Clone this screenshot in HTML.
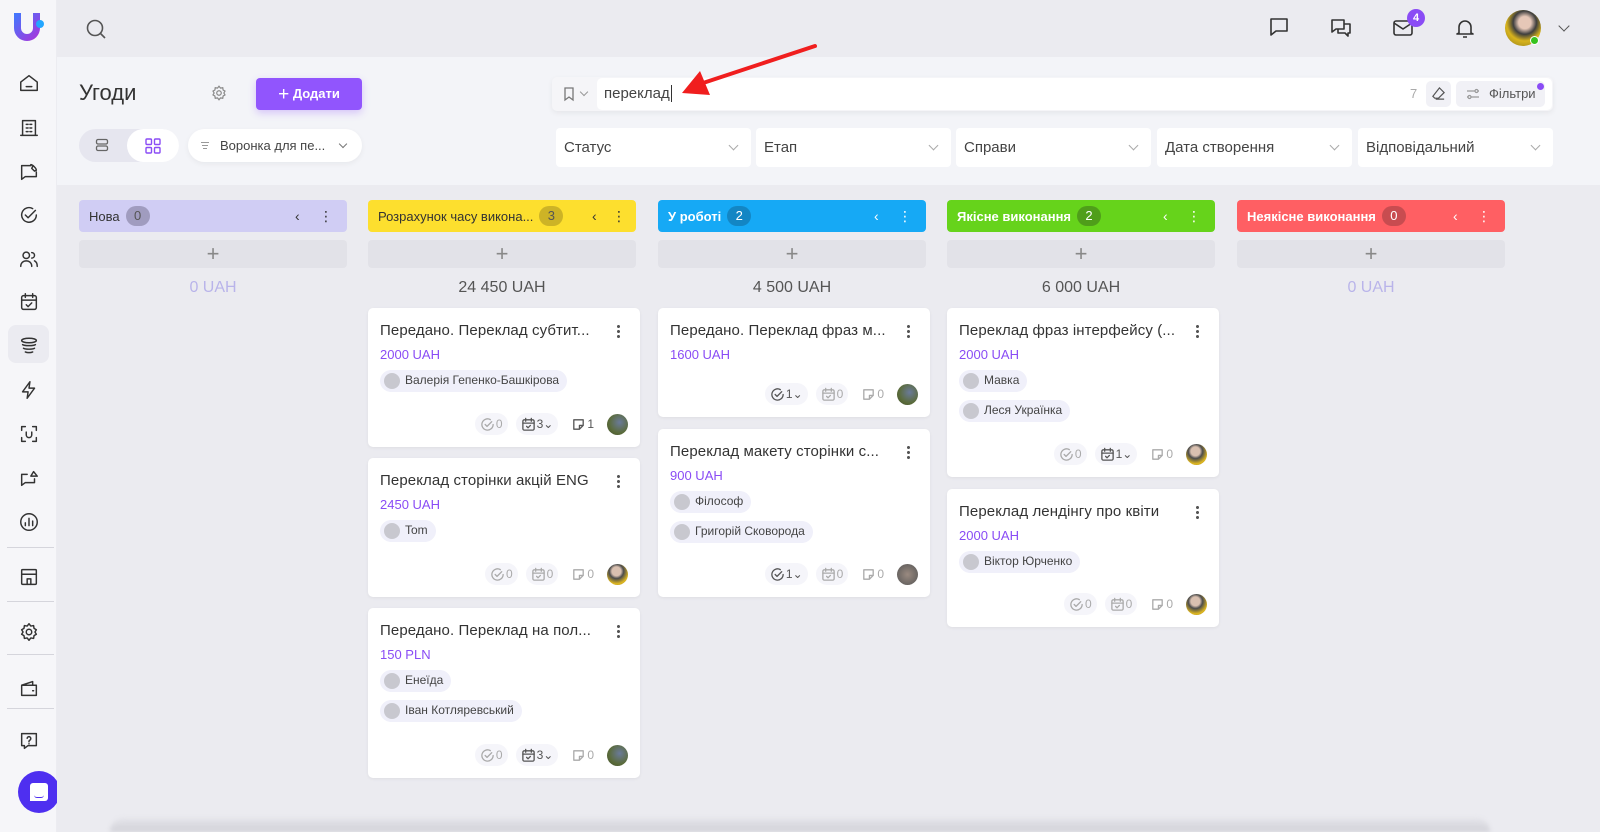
<!DOCTYPE html>
<html><head><meta charset="utf-8">
<style>
*{box-sizing:border-box;margin:0;padding:0}
body{width:1600px;height:832px;overflow:hidden;background:#ebebf0;font-family:"Liberation Sans","DejaVu Sans",sans-serif;color:#333;position:relative}
.abs{position:absolute}
#side{left:0;top:0;width:57px;height:832px;background:#f6f6f9;border-right:1px solid #ececf1}
#top{left:57px;top:0;width:1543px;height:57px;background:#ebebf0}
#head{left:57px;top:57px;width:1543px;height:128px;background:#f3f4f8}
#board{left:57px;top:185px;width:1543px;height:647px;background:#ebebf0}
.si{position:absolute;left:18px;width:22px;height:22px}
.si svg{width:22px;height:22px;fill:none;stroke:#333;stroke-width:1.6;stroke-linecap:round;stroke-linejoin:round}
.div{position:absolute;left:7px;width:47px;height:1px;background:#d5d5dc}
.dd{position:absolute;top:128px;height:39px;width:195px;background:#fff;border-radius:4px;font-size:15px;color:#444;padding:11px 8px}
.dd:after{content:"";position:absolute;right:14px;top:14px;width:6px;height:6px;border-right:1px solid #aaa;border-bottom:1px solid #aaa;transform:rotate(45deg)}
.ch{position:absolute;top:200px;height:32px;width:268px;border-radius:4px;font-size:13px;font-weight:bold;padding:9px 10px;white-space:nowrap}
.bd{display:inline-block;min-width:24px;height:20px;border-radius:10px;text-align:center;line-height:20px;font-weight:normal;margin-left:6px;margin-top:-3px;vertical-align:middle}
.ctl{position:absolute;top:8px;font-weight:normal;font-size:14px}
.add{position:absolute;top:240px;height:28px;width:268px;background:#e2e2e8;border-radius:4px;text-align:center;font-size:22px;color:#888;line-height:27px;font-weight:300}
.tot{position:absolute;top:279px;width:268px;text-align:center;font-size:16px;color:#555}
.card{position:absolute;width:272px;background:#fff;border-radius:5px;box-shadow:0 1px 3px rgba(0,0,0,.06)}
.card .t{position:absolute;left:12px;top:14px;font-size:15px;color:#333;white-space:nowrap;letter-spacing:.1px}
.card .m{position:absolute;right:20px;top:16px;width:3px;height:14px;background:radial-gradient(circle,#555 1.4px,transparent 1.6px) 0 0/3px 5px repeat-y}
.card .p{position:absolute;left:12px;top:39px;font-size:13px;color:#8a4cf5}
.chip{position:absolute;left:12px;height:22px;background:#f0f0fa;border-radius:11px;padding:3px 8px 0 25px;font-size:12px;color:#444;white-space:nowrap}
.chip:before{content:"";position:absolute;left:4px;top:3px;width:16px;height:16px;border-radius:50%;background:#c8c8cf}
.ft{position:absolute;right:12px;bottom:12px;height:22px;display:flex;align-items:center;gap:8px;font-size:12px;color:#aaa}
.ft span{display:flex;align-items:center;gap:1px;background:#f5f5fa;border-radius:11px;padding:2px 5px;height:22px}
.ft svg{width:15px;height:15px;fill:none;stroke:#aaa;stroke-width:1.4;stroke-linecap:round;stroke-linejoin:round}
.ft .nb{background:none}
.av{width:21px;height:21px;border-radius:50%;background:radial-gradient(circle at 60% 40%,#6a7a9a,#5a6b3a 60%,#3f4a2a)}
.av2{background:radial-gradient(circle at 45% 35%,#d9c0b0 25%,#4b4b4b 40%,#e0b820 70%,#7a6a20)}
</style></head><body>
<div id="side" class="abs">
 <svg class="abs" style="left:13px;top:12px" width="32" height="30" viewBox="0 0 32 30"><defs><linearGradient id="g" x1="0" y1="0" x2="1" y2="1"><stop offset="0" stop-color="#3d7bff"/><stop offset="1" stop-color="#b12fd8"/></linearGradient></defs><path d="M1 1h7v15a6 6 0 0 0 12 0V1h7v15a13 13 0 0 1-26 0z" fill="url(#g)"/><circle cx="27" cy="12" r="4" fill="#23a6ff"/></svg>
 <div class="si" style="top:72px"><svg viewBox="0 0 24 24"><path d="M3 11l9-7 9 7v9H3z"/><path d="M9 16h6"/></svg></div>
 <div class="si" style="top:117px"><svg viewBox="0 0 24 24"><path d="M5 20V4h14v16M3 20h18M9 8h2M13 8h2M9 12h2M13 12h2M9 16h2M13 16h2"/></svg></div>
 <div class="si" style="top:161px"><svg viewBox="0 0 24 24"><path d="M4 20V5h10M4 20l4-3h12v-5M14 4c2 0 6 4 6 6l-2 1-3-3 1-2"/></svg></div>
 <div class="si" style="top:204px"><svg viewBox="0 0 24 24"><path d="M20 12a8 8 0 1 1-4-7M8 12l3 3 8-8"/></svg></div>
 <div class="si" style="top:248px"><svg viewBox="0 0 24 24"><circle cx="9" cy="8" r="3.5"/><path d="M3 20c0-4 3-6 6-6s6 2 6 6M15 5a3 3 0 0 1 0 6M18 14c2 1 3 3 3 6"/></svg></div>
 <div class="si" style="top:291px"><svg viewBox="0 0 24 24"><rect x="4" y="5" width="16" height="15" rx="2"/><path d="M8 3v4M16 3v4M4 10h16M9 15l2 2 4-4"/></svg></div>
 <div class="abs" style="left:8px;top:325px;width:41px;height:38px;border-radius:8px;background:#ebebf1"></div>
 <div class="si" style="top:335px"><svg viewBox="0 0 24 24"><ellipse cx="12" cy="6" rx="8" ry="2.5"/><path d="M5 10.5c2 1.5 12 1.5 14 0M6 14.5c2 1.3 10 1.3 12 0M8 18.5c2 1 6 1 8 0"/></svg></div>
 <div class="si" style="top:379px"><svg viewBox="0 0 24 24"><path d="M13 3L5 14h6l-1 7 8-11h-6z"/></svg></div>
 <div class="si" style="top:423px"><svg viewBox="0 0 24 24"><path d="M4 8V4h4M16 4h4v4M20 16v4h-4M8 20H4v-4M9 10v3a3 3 0 0 0 6 0v-3"/></svg></div>
 <div class="si" style="top:467px"><svg viewBox="0 0 24 24"><path d="M4 20V8h6M4 20l4-3h10v-4M14 10l3-5 4 5z"/></svg></div>
 <div class="si" style="top:511px"><svg viewBox="0 0 24 24"><circle cx="12" cy="12" r="9"/><path d="M8 16v-3M12 16V8M16 16v-5"/></svg></div>
 <div class="div" style="top:547px"></div>
 <div class="si" style="top:566px"><svg viewBox="0 0 24 24"><rect x="4" y="4" width="16" height="16" rx="1"/><path d="M4 9h16M10 20v-6h4v6"/></svg></div>
 <div class="div" style="top:601px"></div>
 <div class="si" style="top:621px"><svg viewBox="0 0 24 24"><circle cx="12" cy="12" r="3"/><path d="M12 3l2 2.5 3-.5.5 3L20 9.5 18.5 12 20 14.5 17.5 16l-.5 3-3-.5L12 21l-2-2.5-3 .5-.5-3L4 14.5 5.5 12 4 9.5 6.5 8 7 5l3 .5z"/></svg></div>
 <div class="div" style="top:654px"></div>
 <div class="si" style="top:677px"><svg viewBox="0 0 24 24"><path d="M4 9h16v11H4zM4 9l12-4v4M16 15h1"/></svg></div>
 <div class="div" style="top:708px"></div>
 <div class="si" style="top:730px"><svg viewBox="0 0 24 24"><path d="M4 4h16v13h-9l-4 3v-3H4z"/><path d="M10 9a2 2 0 1 1 3 2l-1 1v1M12 15v.1"/></svg></div>
 <div class="abs" style="left:18px;top:771px;width:42px;height:42px;border-radius:50%;background:#4e2ff0"><div class="abs" style="left:12px;top:12px;width:18px;height:18px;background:#fff;border-radius:3px 3px 3px 0"></div><div class="abs" style="left:16px;top:24px;width:10px;height:3px;border-bottom:1.5px solid #4e2ff0;border-radius:0 0 6px 6px"></div></div>
</div>
<div id="top" class="abs">
 <svg class="abs" style="left:28px;top:18px" width="22" height="22" viewBox="0 0 22 22" fill="none" stroke="#555" stroke-width="1.6"><circle cx="10" cy="10" r="7.5"/><path d="M15.5 15.5L20 20"/></svg>
 <svg class="abs" style="left:1210px;top:15px" width="24" height="24" viewBox="0 0 24 24" fill="none" stroke="#333" stroke-width="1.6" stroke-linejoin="round"><path d="M4 4h16v12H9l-5 4z"/></svg>
 <svg class="abs" style="left:1272px;top:16px" width="24" height="24" viewBox="0 0 24 24" fill="none" stroke="#333" stroke-width="1.6" stroke-linejoin="round"><path d="M3 4h12v9H7l-4 3zM9 13v4h7l3 3v-3h2V8h-6"/></svg>
 <svg class="abs" style="left:1334px;top:16px" width="24" height="24" viewBox="0 0 24 24" fill="none" stroke="#333" stroke-width="1.6" stroke-linejoin="round"><rect x="3" y="5" width="18" height="14" rx="2"/><path d="M3 7l9 6 9-6"/></svg>
 <div class="abs" style="left:1350px;top:9px;width:18px;height:18px;border-radius:50%;background:#8a4cf5;color:#fff;font-size:11px;font-weight:bold;text-align:center;line-height:18px">4</div>
 <svg class="abs" style="left:1396px;top:16px" width="24" height="24" viewBox="0 0 24 24" fill="none" stroke="#333" stroke-width="1.6" stroke-linejoin="round"><path d="M6 17V11a6 6 0 0 1 12 0v6l2 1H4zM10 21h4"/></svg>
 <div class="abs" style="left:1448px;top:10px;width:36px;height:36px;border-radius:50%;background:radial-gradient(circle at 55% 35%,#e6c7b7 20%,#3e3e3e 38%,#d8b31c 60%,#8a7a1c)"></div>
 <div class="abs" style="left:1473px;top:36px;width:9px;height:9px;border-radius:50%;background:#35c21e;border:1.5px solid #fff"></div>
 <div class="abs" style="left:1503px;top:22px;width:8px;height:8px;border-right:1.5px solid #555;border-bottom:1.5px solid #555;transform:rotate(45deg)"></div>
</div>
<div id="head" class="abs"></div>
<div class="abs" style="left:79px;top:80px;font-size:22px;color:#333">Угоди</div>
<svg class="abs" style="left:210px;top:84px" width="18" height="18" viewBox="0 0 24 24" fill="none" stroke="#888" stroke-width="1.6"><circle cx="12" cy="12" r="3"/><path d="M12 3l2 2.5 3-.5.5 3L20 9.5 18.5 12 20 14.5 17.5 16l-.5 3-3-.5L12 21l-2-2.5-3 .5-.5-3L4 14.5 5.5 12 4 9.5 6.5 8 7 5l3 .5z"/></svg>
<div class="abs" style="left:256px;top:78px;width:106px;height:32px;border-radius:4px;background:#9155fd;color:#fff;font-size:13px;font-weight:bold;line-height:32px;text-align:center;box-shadow:0 3px 8px rgba(145,85,253,.3)"><span style="font-size:19px;font-weight:normal;vertical-align:-2px">+</span> Додати</div>
<div class="abs" style="left:79px;top:129px;width:100px;height:33px;border-radius:17px;background:#e6e6ef"></div>
<div class="abs" style="left:127px;top:129px;width:52px;height:33px;border-radius:17px;background:#fff"></div>
<svg class="abs" style="left:95px;top:138px" width="14" height="14" viewBox="0 0 14 14" fill="none" stroke="#666" stroke-width="1.3"><rect x="1.5" y="1.5" width="11" height="4.5" rx="1.5"/><rect x="1.5" y="8" width="11" height="4.5" rx="1.5"/></svg>
<svg class="abs" style="left:145px;top:138px" width="16" height="16" viewBox="0 0 16 16" fill="none" stroke="#8a4cf5" stroke-width="1.4"><rect x="1" y="1" width="5.5" height="5.5" rx="1"/><rect x="9.5" y="1" width="5.5" height="5.5" rx="1"/><rect x="1" y="9.5" width="5.5" height="5.5" rx="1"/><rect x="9.5" y="9.5" width="5.5" height="5.5" rx="1"/></svg>
<div class="abs" style="left:188px;top:129px;width:174px;height:33px;border-radius:17px;background:#fff;box-shadow:0 2px 6px rgba(0,0,0,.05);font-size:13px;color:#444;padding:9px 0 0 32px">Воронка для пе...</div>
<div class="abs" style="left:201px;top:142px;width:8px;height:1px;background:#999"></div>
<div class="abs" style="left:202px;top:145px;width:6px;height:1px;background:#999"></div>
<div class="abs" style="left:203px;top:148px;width:4px;height:1px;background:#999"></div>
<div class="abs" style="left:340px;top:141px;width:6px;height:6px;border-right:1px solid #777;border-bottom:1px solid #777;transform:rotate(45deg)"></div>
<!-- search -->
<div class="abs" style="left:552px;top:77px;width:1001px;height:34px;border-radius:5px;background:#f5f5f8;box-shadow:0 2px 6px rgba(0,0,0,.06)"></div>
<div class="abs" style="left:597px;top:78px;width:955px;height:32px;border-radius:5px;background:#fff"></div>
<svg class="abs" style="left:562px;top:86px" width="14" height="16" viewBox="0 0 14 16" fill="none" stroke="#777" stroke-width="1.3"><path d="M3 2h8v12l-4-3-4 3z"/></svg>
<div class="abs" style="left:581px;top:89px;width:6px;height:6px;border-right:1px solid #999;border-bottom:1px solid #999;transform:rotate(45deg)"></div>
<div class="abs" style="left:604px;top:85px;font-size:15px;color:#444">переклад<span style="border-left:1px solid #333;margin-left:1px"></span></div>
<div class="abs" style="left:1410px;top:86px;font-size:13px;color:#aaa">7</div>
<div class="abs" style="left:1426px;top:81px;width:25px;height:26px;border-radius:5px;background:#f1f1f6"></div>
<svg class="abs" style="left:1431px;top:86px" width="15" height="15" viewBox="0 0 16 16" fill="none" stroke="#555" stroke-width="1.3"><path d="M9 2l5 5-6 6H4l-2-2z M5 14h9"/></svg>
<div class="abs" style="left:1456px;top:81px;width:89px;height:26px;border-radius:5px;background:#f1f1f6;font-size:13px;color:#555;padding:5px 0 0 33px">Фільтри</div>
<svg class="abs" style="left:1466px;top:88px" width="14" height="12" viewBox="0 0 14 12" fill="none" stroke="#999" stroke-width="1.2"><path d="M1 3h8M12 3h1M1 9h1M5 9h8"/><circle cx="10.5" cy="3" r="1.5"/><circle cx="3.5" cy="9" r="1.5"/></svg>
<div class="abs" style="left:1537px;top:83px;width:7px;height:7px;border-radius:50%;background:#8a4cf5"></div>
<!-- dropdowns -->
<div class="dd" style="left:556px">Статус</div>
<div class="dd" style="left:756px">Етап</div>
<div class="dd" style="left:956px">Справи</div>
<div class="dd" style="left:1157px">Дата створення</div>
<div class="dd" style="left:1358px">Відповідальний</div>
<!-- arrow -->
<svg class="abs" style="left:670px;top:40px" width="150" height="70" viewBox="0 0 150 70"><path d="M145 6L30 44" stroke="#f01e1e" stroke-width="4" stroke-linecap="round"/><path d="M12 53L30 31 40 55z" fill="#f01e1e"/></svg>
<div id="board" class="abs"></div>
<!-- columns -->
<div class="ch" style="left:79px;background:#d0cdf4;color:#333;font-weight:normal">Нова<span class="bd" style="background:#a09cbf;color:#555">0</span><span class="ctl" style="left:216px">‹</span><span class="ctl" style="left:240px">⋮</span></div>
<div class="ch" style="left:368px;background:#fddf2e;color:#333;font-weight:normal">Розрахунок часу викона...<span class="bd" style="background:#cdb326;color:#555">3</span><span class="ctl" style="left:224px">‹</span><span class="ctl" style="left:244px">⋮</span></div>
<div class="ch" style="left:658px;background:#16a9f5;color:#fff">У роботі<span class="bd" style="background:#1386c4">2</span><span class="ctl" style="left:216px">‹</span><span class="ctl" style="left:240px">⋮</span></div>
<div class="ch" style="left:947px;background:#66d31b;color:#fff">Якісне виконання<span class="bd" style="background:#4f9e1a">2</span><span class="ctl" style="left:216px">‹</span><span class="ctl" style="left:240px">⋮</span></div>
<div class="ch" style="left:1237px;background:#ff5f63;color:#fff">Неякісне виконання<span class="bd" style="background:#c84c50">0</span><span class="ctl" style="left:216px">‹</span><span class="ctl" style="left:240px">⋮</span></div>
<div class="add" style="left:79px">+</div><div class="add" style="left:368px">+</div><div class="add" style="left:658px">+</div><div class="add" style="left:947px">+</div><div class="add" style="left:1237px">+</div>
<div class="tot" style="left:79px;color:#b9b4ea">0 UAH</div>
<div class="tot" style="left:368px">24 450 UAH</div>
<div class="tot" style="left:658px">4 500 UAH</div>
<div class="tot" style="left:947px">6 000 UAH</div>
<div class="tot" style="left:1237px;color:#b9b4ea">0 UAH</div>

<!-- col2 cards -->
<div class="card" style="left:368px;top:308px;height:139px"><div class="t">Передано. Переклад субтит...</div><div class="m"></div><div class="p">2000 UAH</div><div class="chip" style="top:62px">Валерія Гепенко-Башкірова</div>
<div class="ft"><span><svg viewBox="0 0 16 16"><path d="M14 8a6 6 0 1 1-3-5.2M5.5 8l2 2 5-5"/></svg>0</span><span style="color:#555"><svg viewBox="0 0 16 16" style="stroke:#555"><rect x="2" y="3" width="12" height="11" rx="1.5"/><path d="M5 1.5v3M11 1.5v3M2 6.5h12M6 10l1.5 1.5L10 9"/></svg>3⌄</span><span class="nb"><svg viewBox="0 0 16 16" style="stroke:#555"><path d="M3 3h10v6l-4 4H3zM9 13V9h4"/></svg><span style="color:#555;background:none;padding:0">1</span></span><div class="av"></div></div></div>
<div class="card" style="left:368px;top:458px;height:139px"><div class="t">Переклад сторінки акцій ENG</div><div class="m"></div><div class="p">2450 UAH</div><div class="chip" style="top:62px">Tom</div>
<div class="ft"><span><svg viewBox="0 0 16 16"><path d="M14 8a6 6 0 1 1-3-5.2M5.5 8l2 2 5-5"/></svg>0</span><span><svg viewBox="0 0 16 16"><rect x="2" y="3" width="12" height="11" rx="1.5"/><path d="M5 1.5v3M11 1.5v3M2 6.5h12M6 10l1.5 1.5L10 9"/></svg>0</span><span class="nb"><svg viewBox="0 0 16 16"><path d="M3 3h10v6l-4 4H3zM9 13V9h4"/></svg>0</span><div class="av av2"></div></div></div>
<div class="card" style="left:368px;top:608px;height:170px"><div class="t">Передано. Переклад на пол...</div><div class="m"></div><div class="p">150 PLN</div><div class="chip" style="top:62px">Енеїда</div><div class="chip" style="top:92px">Іван Котляревський</div>
<div class="ft"><span><svg viewBox="0 0 16 16"><path d="M14 8a6 6 0 1 1-3-5.2M5.5 8l2 2 5-5"/></svg>0</span><span style="color:#555"><svg viewBox="0 0 16 16" style="stroke:#555"><rect x="2" y="3" width="12" height="11" rx="1.5"/><path d="M5 1.5v3M11 1.5v3M2 6.5h12M6 10l1.5 1.5L10 9"/></svg>3⌄</span><span class="nb"><svg viewBox="0 0 16 16"><path d="M3 3h10v6l-4 4H3zM9 13V9h4"/></svg>0</span><div class="av"></div></div></div>
<!-- col3 -->
<div class="card" style="left:658px;top:308px;height:109px"><div class="t">Передано. Переклад фраз м...</div><div class="m"></div><div class="p">1600 UAH</div>
<div class="ft"><span style="color:#555"><svg viewBox="0 0 16 16" style="stroke:#555"><path d="M14 8a6 6 0 1 1-3-5.2M5.5 8l2 2 5-5"/></svg>1⌄</span><span><svg viewBox="0 0 16 16"><rect x="2" y="3" width="12" height="11" rx="1.5"/><path d="M5 1.5v3M11 1.5v3M2 6.5h12M6 10l1.5 1.5L10 9"/></svg>0</span><span class="nb"><svg viewBox="0 0 16 16"><path d="M3 3h10v6l-4 4H3zM9 13V9h4"/></svg>0</span><div class="av"></div></div></div>
<div class="card" style="left:658px;top:429px;height:168px"><div class="t">Переклад макету сторінки с...</div><div class="m"></div><div class="p">900 UAH</div><div class="chip" style="top:62px">Філософ</div><div class="chip" style="top:92px">Григорій Сковорода</div>
<div class="ft"><span style="color:#555"><svg viewBox="0 0 16 16" style="stroke:#555"><path d="M14 8a6 6 0 1 1-3-5.2M5.5 8l2 2 5-5"/></svg>1⌄</span><span><svg viewBox="0 0 16 16"><rect x="2" y="3" width="12" height="11" rx="1.5"/><path d="M5 1.5v3M11 1.5v3M2 6.5h12M6 10l1.5 1.5L10 9"/></svg>0</span><span class="nb"><svg viewBox="0 0 16 16"><path d="M3 3h10v6l-4 4H3zM9 13V9h4"/></svg>0</span><div class="av" style="background:radial-gradient(circle,#9a8a80,#555)"></div></div></div>
<!-- col4 -->
<div class="card" style="left:947px;top:308px;height:169px"><div class="t">Переклад фраз інтерфейсу (...</div><div class="m"></div><div class="p">2000 UAH</div><div class="chip" style="top:62px">Мавка</div><div class="chip" style="top:92px">Леся Українка</div>
<div class="ft"><span><svg viewBox="0 0 16 16"><path d="M14 8a6 6 0 1 1-3-5.2M5.5 8l2 2 5-5"/></svg>0</span><span style="color:#555"><svg viewBox="0 0 16 16" style="stroke:#555"><rect x="2" y="3" width="12" height="11" rx="1.5"/><path d="M5 1.5v3M11 1.5v3M2 6.5h12M6 10l1.5 1.5L10 9"/></svg>1⌄</span><span class="nb"><svg viewBox="0 0 16 16"><path d="M3 3h10v6l-4 4H3zM9 13V9h4"/></svg>0</span><div class="av av2"></div></div></div>
<div class="card" style="left:947px;top:489px;height:138px"><div class="t">Переклад лендінгу про квіти</div><div class="m"></div><div class="p">2000 UAH</div><div class="chip" style="top:62px">Віктор Юрченко</div>
<div class="ft"><span><svg viewBox="0 0 16 16"><path d="M14 8a6 6 0 1 1-3-5.2M5.5 8l2 2 5-5"/></svg>0</span><span><svg viewBox="0 0 16 16"><rect x="2" y="3" width="12" height="11" rx="1.5"/><path d="M5 1.5v3M11 1.5v3M2 6.5h12M6 10l1.5 1.5L10 9"/></svg>0</span><span class="nb"><svg viewBox="0 0 16 16"><path d="M3 3h10v6l-4 4H3zM9 13V9h4"/></svg>0</span><div class="av av2"></div></div></div>
<div class="abs" style="left:110px;top:818px;width:1380px;height:14px;background:linear-gradient(#e4e4ea,#d2d2d8);border-radius:14px 14px 0 0;filter:blur(2px)"></div>
</body></html>
